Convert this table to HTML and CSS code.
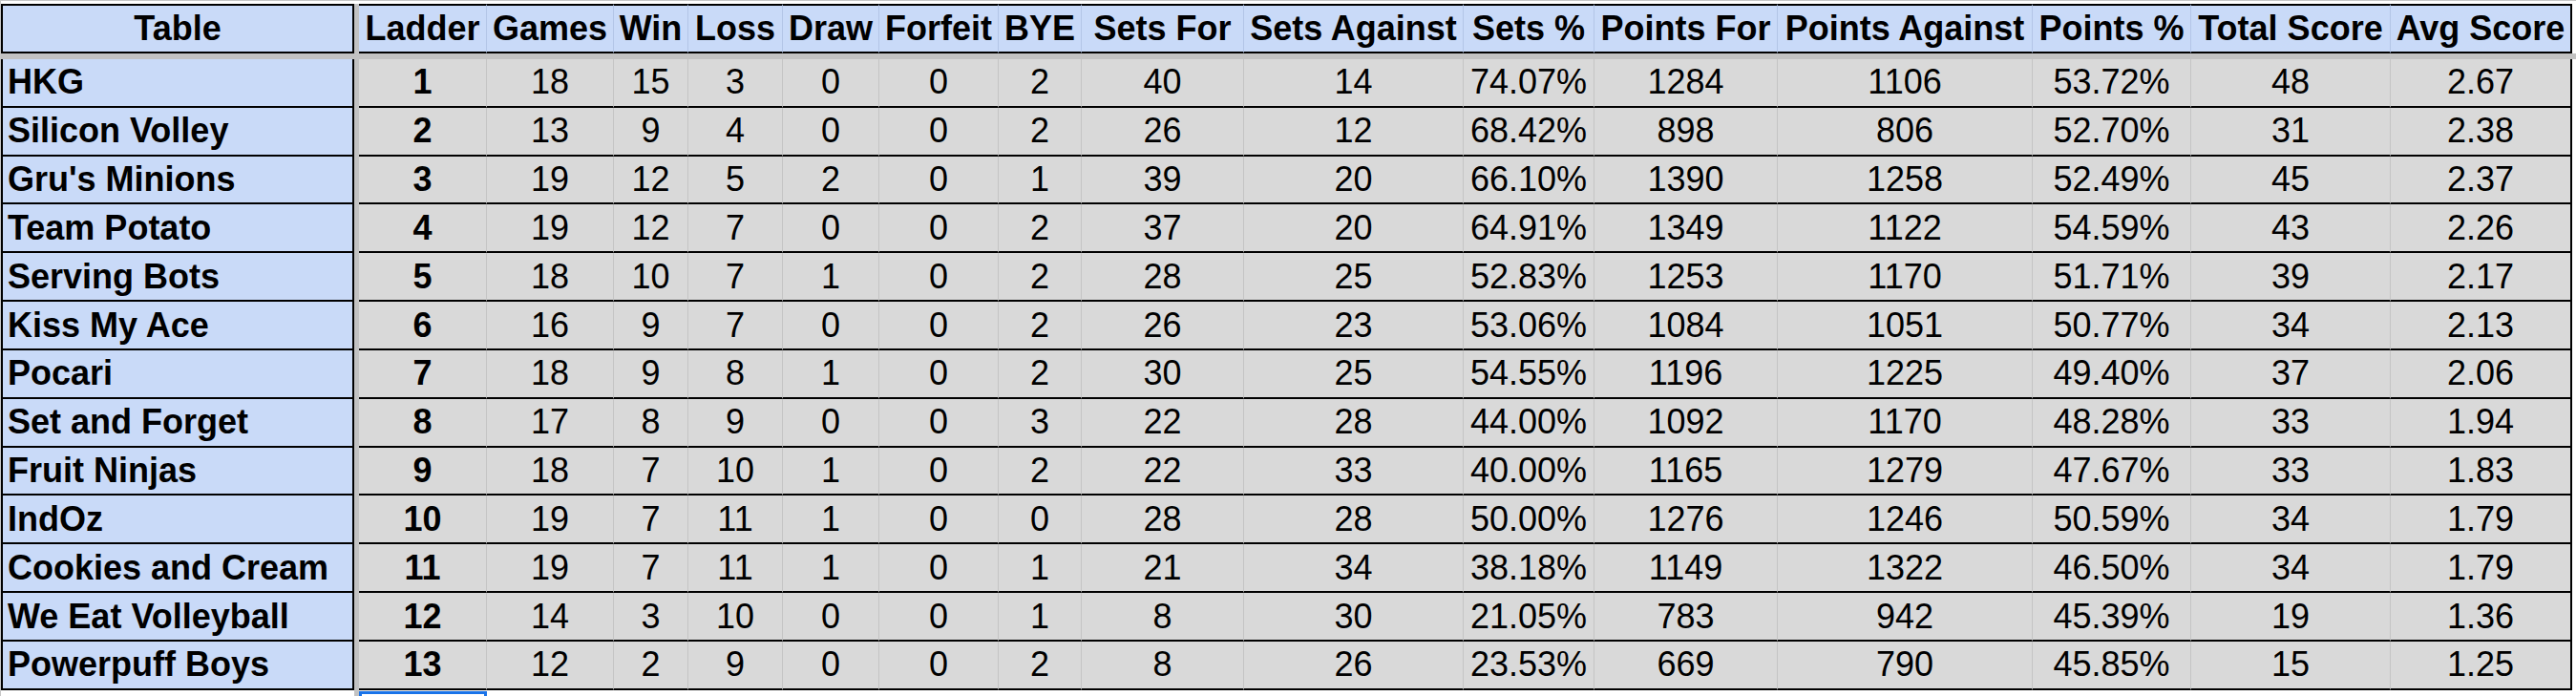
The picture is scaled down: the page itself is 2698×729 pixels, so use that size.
FILE: index.html
```html
<!DOCTYPE html>
<html>
<head>
<meta charset="utf-8">
<title>Ladder</title>
<link rel="stylesheet" href="styles.css">
</head>
<body>
<div class="sheet">
  <div class="row hdr">
    <div class="c name">Table</div><div class="dv"></div>
    <div class="c">Ladder</div><div class="c">Games</div><div class="c">Win</div><div class="c">Loss</div><div class="c">Draw</div><div class="c">Forfeit</div><div class="c">BYE</div><div class="c">Sets For</div><div class="c">Sets Against</div><div class="c">Sets %</div><div class="c">Points For</div><div class="c">Points Against</div><div class="c">Points %</div><div class="c">Total Score</div><div class="c last">Avg Score</div>
  </div>
  <div class="freeze"></div>
  <div class="row"><div class="c name">HKG</div><div class="dv"></div><div class="c b">1</div><div class="c">18</div><div class="c">15</div><div class="c">3</div><div class="c">0</div><div class="c">0</div><div class="c">2</div><div class="c">40</div><div class="c">14</div><div class="c">74.07%</div><div class="c">1284</div><div class="c">1106</div><div class="c">53.72%</div><div class="c">48</div><div class="c last">2.67</div></div>
  <div class="row"><div class="c name">Silicon Volley</div><div class="dv"></div><div class="c b">2</div><div class="c">13</div><div class="c">9</div><div class="c">4</div><div class="c">0</div><div class="c">0</div><div class="c">2</div><div class="c">26</div><div class="c">12</div><div class="c">68.42%</div><div class="c">898</div><div class="c">806</div><div class="c">52.70%</div><div class="c">31</div><div class="c last">2.38</div></div>
  <div class="row"><div class="c name">Gru's Minions</div><div class="dv"></div><div class="c b">3</div><div class="c">19</div><div class="c">12</div><div class="c">5</div><div class="c">2</div><div class="c">0</div><div class="c">1</div><div class="c">39</div><div class="c">20</div><div class="c">66.10%</div><div class="c">1390</div><div class="c">1258</div><div class="c">52.49%</div><div class="c">45</div><div class="c last">2.37</div></div>
  <div class="row"><div class="c name">Team Potato</div><div class="dv"></div><div class="c b">4</div><div class="c">19</div><div class="c">12</div><div class="c">7</div><div class="c">0</div><div class="c">0</div><div class="c">2</div><div class="c">37</div><div class="c">20</div><div class="c">64.91%</div><div class="c">1349</div><div class="c">1122</div><div class="c">54.59%</div><div class="c">43</div><div class="c last">2.26</div></div>
  <div class="row"><div class="c name">Serving Bots</div><div class="dv"></div><div class="c b">5</div><div class="c">18</div><div class="c">10</div><div class="c">7</div><div class="c">1</div><div class="c">0</div><div class="c">2</div><div class="c">28</div><div class="c">25</div><div class="c">52.83%</div><div class="c">1253</div><div class="c">1170</div><div class="c">51.71%</div><div class="c">39</div><div class="c last">2.17</div></div>
  <div class="row"><div class="c name">Kiss My Ace</div><div class="dv"></div><div class="c b">6</div><div class="c">16</div><div class="c">9</div><div class="c">7</div><div class="c">0</div><div class="c">0</div><div class="c">2</div><div class="c">26</div><div class="c">23</div><div class="c">53.06%</div><div class="c">1084</div><div class="c">1051</div><div class="c">50.77%</div><div class="c">34</div><div class="c last">2.13</div></div>
  <div class="row"><div class="c name">Pocari</div><div class="dv"></div><div class="c b">7</div><div class="c">18</div><div class="c">9</div><div class="c">8</div><div class="c">1</div><div class="c">0</div><div class="c">2</div><div class="c">30</div><div class="c">25</div><div class="c">54.55%</div><div class="c">1196</div><div class="c">1225</div><div class="c">49.40%</div><div class="c">37</div><div class="c last">2.06</div></div>
  <div class="row"><div class="c name">Set and Forget</div><div class="dv"></div><div class="c b">8</div><div class="c">17</div><div class="c">8</div><div class="c">9</div><div class="c">0</div><div class="c">0</div><div class="c">3</div><div class="c">22</div><div class="c">28</div><div class="c">44.00%</div><div class="c">1092</div><div class="c">1170</div><div class="c">48.28%</div><div class="c">33</div><div class="c last">1.94</div></div>
  <div class="row"><div class="c name">Fruit Ninjas</div><div class="dv"></div><div class="c b">9</div><div class="c">18</div><div class="c">7</div><div class="c">10</div><div class="c">1</div><div class="c">0</div><div class="c">2</div><div class="c">22</div><div class="c">33</div><div class="c">40.00%</div><div class="c">1165</div><div class="c">1279</div><div class="c">47.67%</div><div class="c">33</div><div class="c last">1.83</div></div>
  <div class="row"><div class="c name">IndOz</div><div class="dv"></div><div class="c b">10</div><div class="c">19</div><div class="c">7</div><div class="c">11</div><div class="c">1</div><div class="c">0</div><div class="c">0</div><div class="c">28</div><div class="c">28</div><div class="c">50.00%</div><div class="c">1276</div><div class="c">1246</div><div class="c">50.59%</div><div class="c">34</div><div class="c last">1.79</div></div>
  <div class="row"><div class="c name">Cookies and Cream</div><div class="dv"></div><div class="c b">11</div><div class="c">19</div><div class="c">7</div><div class="c">11</div><div class="c">1</div><div class="c">0</div><div class="c">1</div><div class="c">21</div><div class="c">34</div><div class="c">38.18%</div><div class="c">1149</div><div class="c">1322</div><div class="c">46.50%</div><div class="c">34</div><div class="c last">1.79</div></div>
  <div class="row"><div class="c name">We Eat Volleyball</div><div class="dv"></div><div class="c b">12</div><div class="c">14</div><div class="c">3</div><div class="c">10</div><div class="c">0</div><div class="c">0</div><div class="c">1</div><div class="c">8</div><div class="c">30</div><div class="c">21.05%</div><div class="c">783</div><div class="c">942</div><div class="c">45.39%</div><div class="c">19</div><div class="c last">1.36</div></div>
  <div class="row"><div class="c name">Powerpuff Boys</div><div class="dv"></div><div class="c b">13</div><div class="c">12</div><div class="c">2</div><div class="c">9</div><div class="c">0</div><div class="c">0</div><div class="c">2</div><div class="c">8</div><div class="c">26</div><div class="c">23.53%</div><div class="c">669</div><div class="c">790</div><div class="c">45.85%</div><div class="c">15</div><div class="c last">1.25</div></div>
  <div class="row tail">
    <div class="e"></div><div class="dv"></div><div class="e sel"></div>
  </div>
</div>
</body>
</html>
```

FILE: styles.css
```css
* {
  box-sizing: border-box;
  margin: 0;
  padding: 0;
}

html,
body {
  background: #ffffff;
}

body {
  width: 2698px;
  height: 729px;
  overflow: hidden;
  font-family: "Liberation Sans", Arial, sans-serif;
  font-size: 36px;
  color: #000000;
}

.sheet {
  width: 2698px;
  border-top: 1px solid #c7c7c7;
  border-left: 1px solid #c7c7c7;
  padding-top: 3px;
}

.row {
  display: grid;
  grid-template-columns: 370px 5px 134px 133px 78px 99px 101px 125px 87px 170px 230px 137px 192px 267px 166px 209px 190px;
}

.c {
  display: flex;
  align-items: center;
  justify-content: center;
  height: 50.83px;
  background: #d9d9d9;
  border-right: 1px solid #c4c4c4;
  border-bottom: 2px solid #000000;
  white-space: nowrap;
  line-height: 1;
}

.c.name {
  justify-content: flex-start;
  padding-left: 5px;
  background: #c9daf8;
  border-left: 2px solid #000000;
  border-right: 2px solid #000000;
  font-weight: bold;
}

.c.b {
  font-weight: bold;
}

.c.last {
  border-right: 2px solid #000000;
}

.dv {
  background: #c2c2c2;
}

.hdr .c {
  height: 52px;
  background: #c9daf8;
  border-top: 2px solid #000000;
  border-right-color: #b3c5e6;
  font-weight: bold;
}

.hdr .c.name {
  justify-content: center;
  padding-left: 0;
  border-right-color: #000000;
}

.hdr .c.last {
  border-right-color: #000000;
}

.freeze {
  height: 6px;
  background: #c2c2c2;
}

.tail .e {
  height: 8px;
}

.tail .sel {
  border-top: 3px solid #1a73e8;
  border-left: 3px solid #1a73e8;
  border-right: 3px solid #1a73e8;
  margin-top: 1px;
}
```
